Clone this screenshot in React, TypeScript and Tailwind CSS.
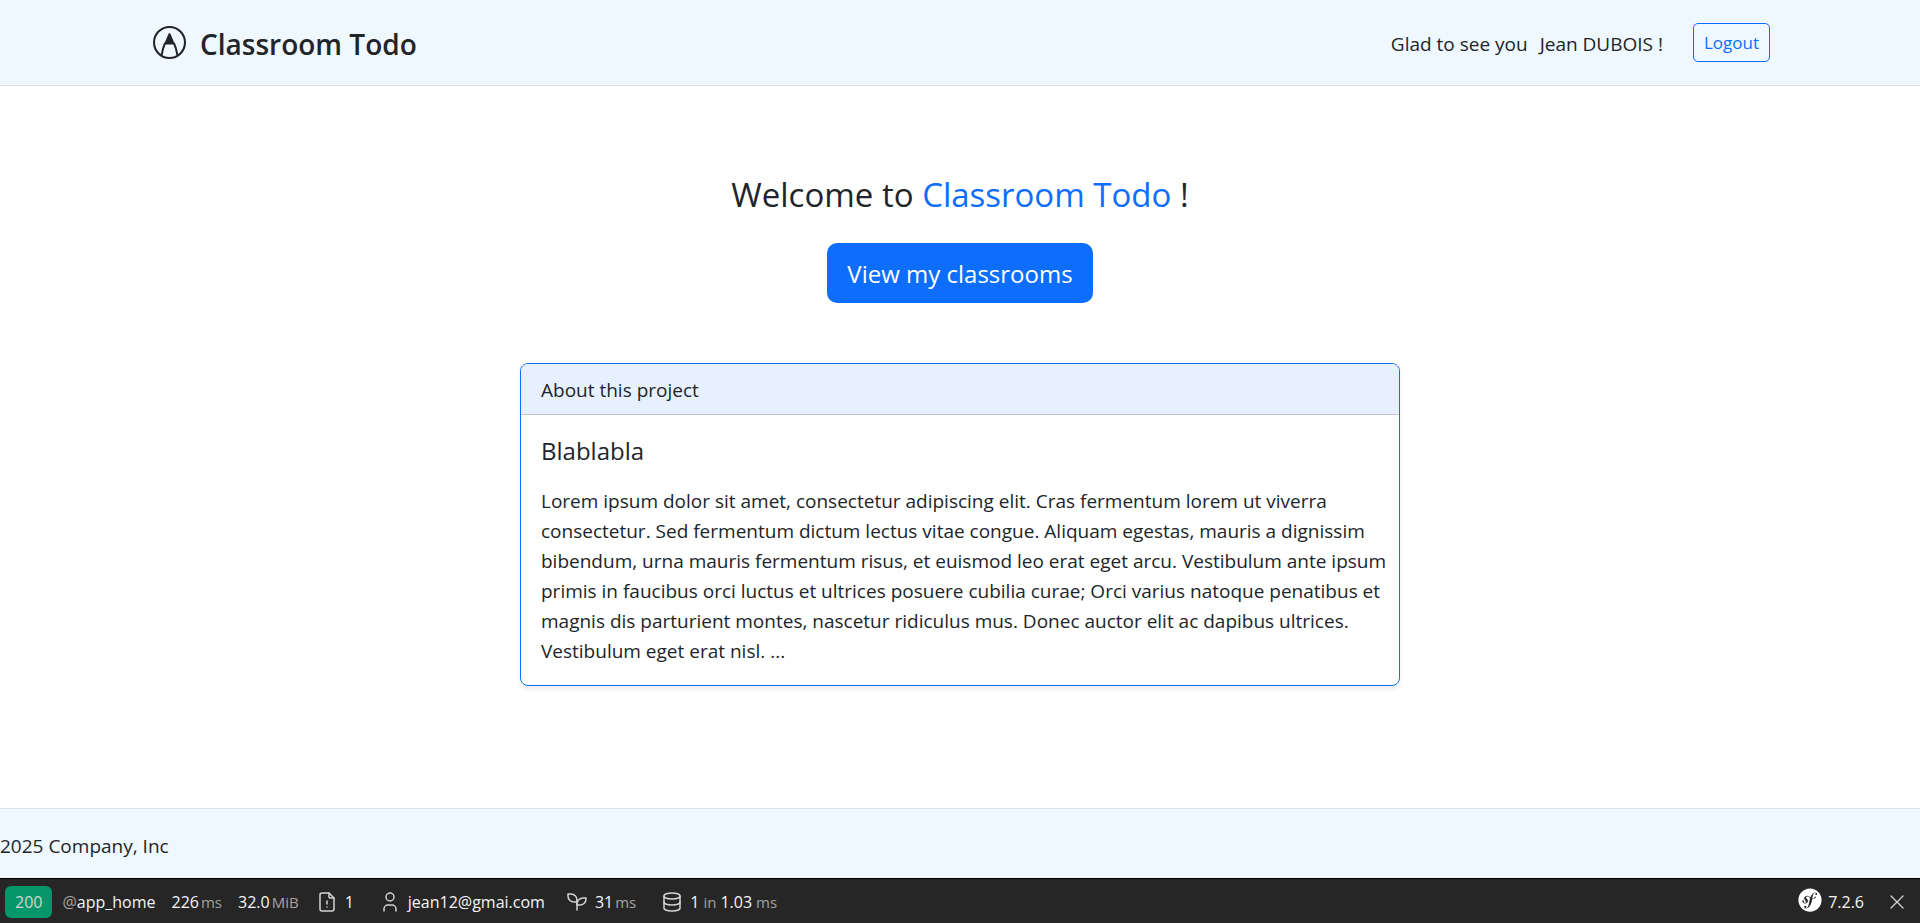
import React from "react";
import { FaSymfony } from "react-icons/fa";

function ToolIcon({ children }: { children: React.ReactNode }) {
  return (
    <svg viewBox="0 0 24 24" className="size-6 shrink-0" fill="none" stroke="#d4d4d4" strokeWidth="1.5" strokeLinecap="round" strokeLinejoin="round" aria-hidden="true">
      {children}
    </svg>
  );
}

function Unit({ children }: { children: React.ReactNode }) {
  return <span className="text-[15px] text-[#a3a3a3]">{children}</span>;
}

function BrandMark() {
  return (
    <svg viewBox="0 0 16 16" className="size-[33px] shrink-0" aria-hidden="true">
      <circle cx="8" cy="8" r="7.5" fill="none" stroke="#212529" strokeWidth="1" />
      <path d="M7.6 3.6Q8 3.2 8.4 3.6L10 7.4Q10.4 8.2 10.5 9H5.5Q5.6 8.2 6 7.4z" fill="#212529" />
      <path d="M5.9 8.2Q4.7 10.8 4.2 14M10.1 8.2Q11.3 10.8 11.8 14" fill="none" stroke="#212529" strokeWidth="1" />
    </svg>
  );
}

function Header() {
  return (
    <header className="border-b border-[#dee2e6] bg-[#eff7ff]">
      <div className="mx-auto flex h-[85px] max-w-[1650px] items-center justify-between pr-[15px] pl-[18px]">
        <a href="#" className="flex items-center gap-[14px] text-[28px] leading-9 font-semibold">
          <BrandMark />
          <span className="pt-0.5">Classroom Todo</span>
        </a>
        <div className="flex items-center gap-[30px]">
          <p className="flex gap-3 pt-0.5">
            <span>Glad to see you</span>
            <span>Jean DUBOIS !</span>
          </p>
          <button type="button" className="rounded-[5px] border border-[#0d6efd] px-2.5 py-1 text-[17px] leading-[29px] text-[#0d6efd]">
            Logout
          </button>
        </div>
      </div>
    </header>
  );
}

function Toolbar() {
  return (
    <div className="flex h-[45px] items-center border-t border-black bg-[#262626] pt-px text-base text-[#f5f5f5]">
      <div className="flex flex-1 items-center">
        <span className="ml-[5px] flex h-8 items-center rounded-md bg-[#059669] px-2.5 text-[#d4d4d4]">200</span>
        <span className="ml-2.5"><span className="text-[#a3a3a3]">@</span>app_home</span>
        <span className="ml-4 flex items-baseline gap-0.5">226 <Unit>ms</Unit></span>
        <span className="ml-4 flex items-baseline gap-0.5">32.0 <Unit>MiB</Unit></span>
        <span className="ml-4 flex items-center gap-1.5">
          <ToolIcon>
            <path d="M14 3v4a1 1 0 0 0 1 1h4" />
            <path d="M17 21h-10a2 2 0 0 1 -2 -2v-14a2 2 0 0 1 2 -2h7l5 5v11a2 2 0 0 1 -2 2z" />
            <path d="M12 17l.01 0M12 11l0 3" />
          </ToolIcon>
          1
        </span>
        <span className="ml-6 flex items-center gap-1.5">
          <ToolIcon>
            <path d="M8 7a4 4 0 1 0 8 0a4 4 0 0 0 -8 0" />
            <path d="M6 21v-2a4 4 0 0 1 4 -4h4a4 4 0 0 1 4 4v2" />
          </ToolIcon>
          jean12@gmai.com
        </span>
        <span className="ml-5 flex items-center gap-1.5">
          <ToolIcon>
            <path d="M12 10a6 6 0 0 0 -6 -6h-3v2a6 6 0 0 0 6 6h3" />
            <path d="M12 14a6 6 0 0 1 6 -6h3v1a6 6 0 0 1 -6 6h-3" />
            <path d="M12 20l0 -10" />
          </ToolIcon>
          <span className="flex items-baseline gap-0.5">31 <Unit>ms</Unit></span>
        </span>
        <span className="ml-6 flex items-center gap-1.5">
          <ToolIcon>
            <ellipse cx="12" cy="6" rx="8" ry="3" />
            <path d="M4 6v6a8 3 0 0 0 16 0v-6" />
            <path d="M4 12v6a8 3 0 0 0 16 0v-6" />
          </ToolIcon>
          <span className="flex items-baseline gap-1">
            1 <Unit>in</Unit> 1.03 <Unit>ms</Unit>
          </span>
        </span>
      </div>
      <span className="flex items-center gap-1.5">
        <FaSymfony className="mb-1 size-6 text-white" aria-hidden="true" />
        7.2.6
      </span>
      <button type="button" aria-label="Close toolbar" className="mr-3 ml-[22px]">
        <svg viewBox="0 0 22 22" className="size-[22px]" stroke="#d4d4d4" strokeWidth="1.3" strokeLinecap="round" aria-hidden="true">
          <path d="M5 5l12 12M17 5L5 17" />
        </svg>
      </button>
    </div>
  );
}

export default function App() {
  return (
    <div className="flex min-h-screen flex-col bg-white font-['Open_Sans','Noto_Sans',sans-serif] text-[19px] leading-[30px] text-[#212529]">
      <Header />
      <main className="flex flex-1 flex-col items-center px-4 pt-[88px] pb-10">
        <h1 className="text-[33px] leading-[42px]">
          Welcome to <span className="text-[#0d6efd]">Classroom Todo</span> !
        </h1>
        <button type="button" className="mt-[27px] rounded-[10px] bg-[#0d6efd] px-5 pt-3 pb-2.5 text-2xl leading-[38px] text-white">
          View my classrooms
        </button>
        <section className="mt-[60px] w-full max-w-[880px] overflow-hidden rounded-lg border border-[#0d6efd] shadow-[0_3px_5px_rgba(0,0,0,0.075)]">
          <div className="border-b border-[#bec6d2] bg-[#e7f0ff] px-5 pt-[11px] pb-[9px]">About this project</div>
          <div className="pt-[21px] pr-2 pb-[19px] pl-5">
            <h2 className="text-2xl leading-[30px]">Blablabla</h2>
            <p className="mt-5">
              Lorem ipsum dolor sit amet, consectetur adipiscing elit. Cras fermentum lorem ut viverra consectetur. Sed fermentum dictum lectus vitae congue. Aliquam egestas, mauris a dignissim bibendum, urna mauris fermentum risus, et euismod leo erat eget arcu. Vestibulum ante ipsum primis in faucibus orci luctus et ultrices posuere cubilia curae; Orci varius natoque penatibus et magnis dis parturient montes, nascetur ridiculus mus. Donec auctor elit ac dapibus ultrices. Vestibulum eget erat nisl. ...
            </p>
          </div>
        </section>
      </main>
      <footer className="border-t border-[#dee2e6] bg-[#eff7ff] pt-[22px] pb-[17px]">2025 Company, Inc</footer>
      <Toolbar />
    </div>
  );
}
